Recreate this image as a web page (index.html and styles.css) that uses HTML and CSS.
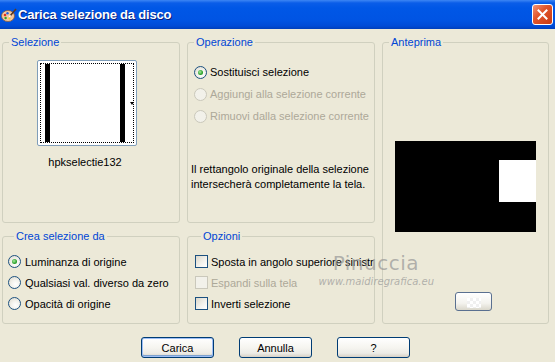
FILE: index.html
```html
<!DOCTYPE html>
<html>
<head>
	<meta charset="utf-8">
	<title>Carica selezione da disco</title>
	<link rel="stylesheet" href="styles.css">
</head>
<body>
<div class="finestra">
	<div class="titolo">
		<svg class="icona" width="16" height="16" viewBox="0 0 16 16">
			<ellipse cx="7" cy="9" rx="6.5" ry="5.5" fill="#f3c9a0" stroke="#8a5a3a" stroke-width="0.8"/>
			<circle cx="4" cy="8" r="1.3" fill="#e03020"/>
			<circle cx="6.5" cy="6.2" r="1.2" fill="#2060e0"/>
			<circle cx="4.6" cy="11" r="1.2" fill="#30a030"/>
			<circle cx="8.5" cy="11.5" r="1.1" fill="#f0d020"/>
			<path d="M9 9 L15 2" stroke="#5a3a20" stroke-width="1.6"/>
			<path d="M8.2 9.8 L9.6 8.4" stroke="#ffffff" stroke-width="1.6"/>
		</svg>
		<span class="testo-titolo">Carica selezione da disco</span>
		<span class="chiudi">
			<svg width="11" height="11" viewBox="0 0 11 11">
				<path d="M1.5 1.5 L9.5 9.5 M9.5 1.5 L1.5 9.5" stroke="#fff" stroke-width="2" stroke-linecap="square"/>
			</svg>
		</span>
	</div>

	<div class="corpo">
		<div class="griglia">
			<fieldset class="gruppo selezione">
				<legend>Selezione</legend>
				<div class="miniatura">
					<div class="focus">
						<span class="barra"></span>
						<span class="barra"></span>
					</div>
					<span class="freccia"></span>
				</div>
				<div class="nome">hpkselectie132</div>
			</fieldset>

			<fieldset class="gruppo operazione">
				<legend>Operazione</legend>
				<div class="opzioni-radio">
					<label class="voce"><span class="radio attivo"></span>Sostituisci selezione</label>
					<label class="voce disabilitata"><span class="radio"></span>Aggiungi alla selezione corrente</label>
					<label class="voce disabilitata"><span class="radio"></span>Rimuovi dalla selezione corrente</label>
				</div>
				<p class="nota">Il rettangolo originale della selezione<br>intersecherà completamente la tela.</p>
			</fieldset>

			<fieldset class="gruppo anteprima">
				<legend>Anteprima</legend>
				<div class="tela">
					<div class="area"></div>
				</div>
				<div class="mini-pulsante"><span class="scacchi"></span></div>
			</fieldset>

			<fieldset class="gruppo crea">
				<legend>Crea selezione da</legend>
				<label class="voce"><span class="radio attivo"></span>Luminanza di origine</label>
				<label class="voce"><span class="radio"></span>Qualsiasi val. diverso da zero</label>
				<label class="voce"><span class="radio"></span>Opacità di origine</label>
			</fieldset>

			<fieldset class="gruppo opzioni">
				<legend>Opzioni</legend>
				<label class="voce"><span class="casella"></span>Sposta in angolo superiore sinistro</label>
				<label class="voce disabilitata"><span class="casella"></span>Espandi sulla tela</label>
				<label class="voce"><span class="casella"></span>Inverti selezione</label>
			</fieldset>
		</div>

		<div class="pulsanti">
			<button class="pulsante predefinito">Carica</button>
			<button class="pulsante">Annulla</button>
			<button class="pulsante">?</button>
		</div>
	</div>

	<div class="filigrana">
		<div class="firma">Pinuccia</div>
		<div class="sito">www.maidiregrafica.eu</div>
	</div>
</div>
</body>
</html>
```

FILE: styles.css
```css
body {
	margin: 0;
	background-color: #ECE9D8;
	font-family: "Liberation Sans", Arial, sans-serif;
	font-size: 11px;
	color: #000;
}
.finestra {
	position: relative;
	width: 555px;
	height: 362px;
	overflow: hidden;
}

/* barra del titolo */
.titolo {
	height: 29px;
	display: flex;
	align-items: center;
	background: linear-gradient(to bottom, #3D86F4 0, #0A5DE8 3px, #0057E6 8px, #0054E3 20px, #004BD6 26px, #003FBA 29px);
	padding-left: 1px;
}
.icona {
	margin-right: 1px;
}
.testo-titolo {
	flex: 1;
	color: #fff;
	font-size: 13px;
	font-weight: bold;
	text-shadow: 1px 1px 0 #0A1E7A;
	letter-spacing: -0.2px;
}
.chiudi {
	width: 19px;
	height: 19px;
	margin-right: 2px;
	border: 1px solid #fff;
	border-radius: 3px;
	background: linear-gradient(135deg, #F39477 0, #E2562C 40%, #C93A12 100%);
	display: flex;
	align-items: center;
	justify-content: center;
}

/* gruppi */
.corpo {
	padding: 7px 0 0 2px;
}
.griglia {
	display: grid;
	grid-template-columns: 178px 188px 167px;
	grid-template-rows: 187px 94px;
	column-gap: 7px;
	row-gap: 7px;
}
.gruppo {
	margin: 0;
	padding: 0;
	min-width: 0;
	border: 1px solid #D0D0BF;
	border-radius: 3px;
}
.gruppo legend {
	margin-left: 6px;
	padding: 0 2px;
	line-height: 13px;
	color: #0046D5;
}
.anteprima {
	grid-row: span 2;
}

/* selezione */
.miniatura {
	position: relative;
	width: 98px;
	height: 84px;
	margin: 11px 0 0 34px;
	border: 1px solid #7F9DB9;
	border-radius: 2px;
	background: #fff;
}
.focus {
	margin: 2px;
	height: 78px;
	border: 1px dotted #000;
	display: flex;
	justify-content: space-between;
	padding: 0 8px 0 4px;
}
.barra {
	width: 5px;
	background: #000;
}
.freccia {
	position: absolute;
	right: 2px;
	top: 41px;
	border-left: 2px solid transparent;
	border-right: 2px solid transparent;
	border-top: 3px solid #000;
}
.nome {
	width: 100px;
	margin: 10px 0 0 32px;
	text-align: center;
	line-height: 13px;
}

/* voci radio e caselle */
.voce {
	display: flex;
	align-items: center;
	gap: 3px;
	white-space: nowrap;
}
.voce.disabilitata {
	color: #ACA899;
}
.radio {
	flex: none;
	width: 11px;
	height: 11px;
	border: 1px solid #1C5180;
	border-radius: 50%;
	background: radial-gradient(circle at 60% 65%, #fff 0, #F4F3EE 40%, #DCD8CB 100%);
	display: flex;
	align-items: center;
	justify-content: center;
}
.radio.attivo::after {
	content: "";
	width: 5px;
	height: 5px;
	border-radius: 50%;
	background: radial-gradient(circle at 40% 40%, #A8EBA0 0, #2BA12B 60%, #218A21 100%);
}
.disabilitata .radio {
	border-color: #CAC8BB;
	background: #F2F1EA;
}
.casella {
	flex: none;
	width: 11px;
	height: 11px;
	border: 1px solid #1C5180;
	background: linear-gradient(135deg, #DCD8CB 0, #F4F3EE 60%, #fff 100%);
}
.disabilitata .casella {
	border-color: #CAC8BB;
	background: #F2F1EA;
}

/* operazione */
.opzioni-radio {
	margin-top: 12px;
	padding-left: 6px;
}
.operazione .voce {
	height: 22px;
}
.nota {
	margin: 35px 0 0 3px;
	line-height: 15px;
}

/* anteprima */
.tela {
	width: 141px;
	height: 91px;
	margin: 92px 0 0 12px;
	background: #000;
	display: flex;
	justify-content: flex-end;
	align-items: flex-start;
}
.area {
	width: 37px;
	height: 42px;
	margin-top: 19px;
	background: #fff;
}
.mini-pulsante {
	width: 35px;
	height: 17px;
	margin: 60px 0 0 72px;
	border: 1px solid #5A7090;
	border-radius: 3px;
	background: linear-gradient(to bottom, #fff 0, #F4F3EE 60%, #DAD7CB 100%);
	display: flex;
	align-items: center;
	justify-content: center;
}
.scacchi {
	width: 14px;
	height: 10px;
	margin-top: 2px;
	background: repeating-conic-gradient(#F0F0F0 0 25%, #fff 0 50%) 0 0 / 6px 6px;
}

/* crea e opzioni */
.crea {
	padding: 8px 0 0 5px;
}
.crea .voce {
	height: 21px;
	gap: 4px;
}
.opzioni {
	padding: 8px 0 0 7px;
	overflow: hidden;
}
.opzioni .voce {
	height: 21px;
}

/* pulsanti */
.pulsanti {
	display: flex;
	gap: 25px;
	margin-top: 13px;
	padding-left: 139px;
}
.pulsante {
	width: 73px;
	height: 21px;
	padding: 0;
	font-family: "Liberation Sans", Arial, sans-serif;
	font-size: 11px;
	color: #000;
	border: 1px solid #003C74;
	border-radius: 3px;
	background: linear-gradient(to bottom, #fff 0, #F6F5F0 50%, #ECEBE6 80%, #D6D0C5 100%);
}
.predefinito {
	box-shadow: inset 0 0 0 1px #9EBEF5, inset 0 -1px 0 1px #7DA2CE;
}

/* filigrana sopra il contenuto */
.filigrana {
	position: absolute;
	left: 310px;
	top: 251px;
	color: rgba(150, 150, 150, 0.7);
	text-align: right;
	width: 124px;
}
.firma {
	font-family: "DejaVu Sans", sans-serif;
	font-size: 20px;
	line-height: 24px;
	letter-spacing: 0.5px;
	padding-right: 15px;
}
.sito {
	font-family: "DejaVu Sans", sans-serif;
	font-size: 10px;
	font-style: italic;
	line-height: 14px;
}
```
